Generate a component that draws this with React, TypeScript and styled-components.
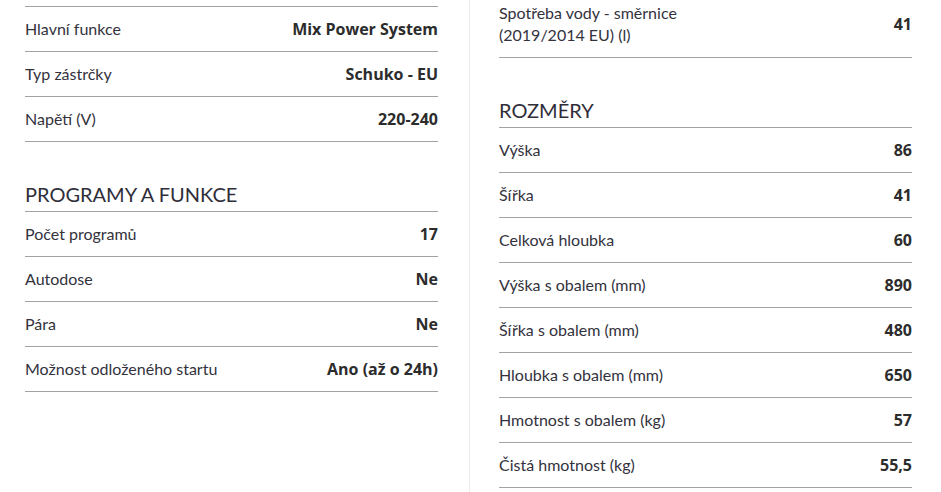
import styled, { createGlobalStyle } from 'styled-components';

const GlobalStyle = createGlobalStyle`
  html, body {
    margin: 0;
    padding: 0;
    background: #ffffff;
  }
  body {
    font-family: Lato, "Noto Sans", sans-serif;
    color: #2f2e39;
    overflow: hidden;
  }
`;

const Page = styled.div`
  display: grid;
  grid-template-columns: 469px 1px 1fr;
  width: 941px;
  height: 492px;
  overflow: hidden;
`;

const Column = styled.section<{ $top: number; $left: number; $right: number }>`
  margin-top: ${p => p.$top}px;
  padding: 0 ${p => p.$right}px 0 ${p => p.$left}px;
`;

const Divider = styled.div`
  background: #ececec;
`;

const Table = styled.div`
  border-top: 1px solid #a3a3a3;
`;

const Row = styled.div<{ $multi?: boolean }>`
  display: flex;
  align-items: center;
  justify-content: space-between;
  gap: 24px;
  height: ${p => (p.$multi ? 'auto' : '44px')};
  padding: ${p => (p.$multi ? '10px 0 11px' : '0')};
  border-bottom: 1px solid #a3a3a3;
  line-height: 22px;
`;

const Label = styled.span`
  font-size: 16px;
  color: #33323d;
  line-height: 22px;
`;

const Value = styled.span`
  font-family: "Open Sans", sans-serif;
  font-size: 16px;
  font-weight: 700;
  line-height: 22px;
  color: #2c2c2c;
  text-align: right;
  white-space: nowrap;
`;

const Heading = styled.h2`
  margin: 0;
  padding: 40px 0 5px;
  font-size: 20px;
  font-weight: 400;
  line-height: 24px;
  color: #2f2e39;
  border-bottom: 1px solid #a3a3a3;
`;

type Spec = [string, string];

const power: Spec[] = [
  ['Hlavní funkce', 'Mix Power System'],
  ['Typ zástrčky', 'Schuko - EU'],
  ['Napětí (V)', '220-240'],
];

const programs: Spec[] = [
  ['Počet programů', '17'],
  ['Autodose', 'Ne'],
  ['Pára', 'Ne'],
  ['Možnost odloženého startu', 'Ano (až o 24h)'],
];

const dims: Spec[] = [
  ['Výška', '86'],
  ['Šířka', '41'],
  ['Celková hloubka', '60'],
  ['Výška s obalem (mm)', '890'],
  ['Šířka s obalem (mm)', '480'],
  ['Hloubka s obalem (mm)', '650'],
  ['Hmotnost s obalem (kg)', '57'],
  ['Čistá hmotnost (kg)', '55,5'],
];

const Rows = ({ items }: { items: Spec[] }) => (
  <>
    {items.map(([label, value]) => (
      <Row key={label}>
        <Label>{label}</Label>
        <Value>{value}</Value>
      </Row>
    ))}
  </>
);

export default function App() {
  return (
    <>
      <GlobalStyle />
      <Page>
        <Column $top={6} $left={25} $right={31}>
          <Table>
            <Rows items={power} />
          </Table>
          <Heading>PROGRAMY A FUNKCE</Heading>
          <Rows items={programs} />
        </Column>
        <Divider />
        <Column $top={-9} $left={29} $right={29}>
          <Table>
            <Row $multi>
              <Label>
                Spotřeba vody - směrnice
                <br />
                (2019/2014 EU) (l)
              </Label>
              <Value>41</Value>
            </Row>
          </Table>
          <Heading>ROZMĚRY</Heading>
          <Rows items={dims} />
        </Column>
      </Page>
    </>
  );
}
